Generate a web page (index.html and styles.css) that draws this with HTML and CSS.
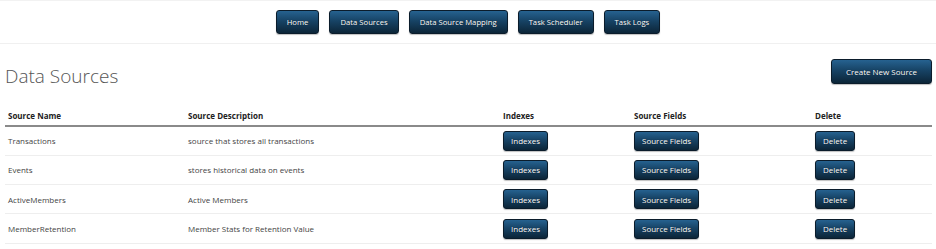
FILE: index.html
```html
<!DOCTYPE html>
<html lang="en">
<head>
  <meta charset="UTF-8">
  <title>Data Sources</title>
  <meta name="viewport" content="width=device-width, initial-scale=1.0">
  <link rel="stylesheet" href="styles.css">
</head>
<body>

<nav class="top-nav">
  <a class="btn nav-btn" href="#">Home</a>
  <a class="btn nav-btn" href="#">Data Sources</a>
  <a class="btn nav-btn" href="#">Data Source Mapping</a>
  <a class="btn nav-btn" href="#">Task Scheduler</a>
  <a class="btn nav-btn" href="#">Task Logs</a>
</nav>

<main class="page">
  <div class="page-head">
    <h1>Data Sources</h1>
    <button class="btn create-btn">Create New Source</button>
  </div>

  <table class="sources">
    <thead>
      <tr>
        <th class="col-name">Source Name</th>
        <th class="col-desc">Source Description</th>
        <th class="col-idx">Indexes</th>
        <th class="col-fields">Source Fields</th>
        <th class="col-del">Delete</th>
      </tr>
    </thead>
    <tbody>
      <tr>
        <td>Transactions</td>
        <td>source that stores all transactions</td>
        <td><button class="btn row-btn">Indexes</button></td>
        <td><button class="btn row-btn">Source Fields</button></td>
        <td><button class="btn row-btn">Delete</button></td>
      </tr>
      <tr>
        <td>Events</td>
        <td>stores historical data on events</td>
        <td><button class="btn row-btn">Indexes</button></td>
        <td><button class="btn row-btn">Source Fields</button></td>
        <td><button class="btn row-btn">Delete</button></td>
      </tr>
      <tr>
        <td>ActiveMembers</td>
        <td>Active Members</td>
        <td><button class="btn row-btn">Indexes</button></td>
        <td><button class="btn row-btn">Source Fields</button></td>
        <td><button class="btn row-btn">Delete</button></td>
      </tr>
      <tr>
        <td>MemberRetention</td>
        <td>Member Stats for Retention Value</td>
        <td><button class="btn row-btn">Indexes</button></td>
        <td><button class="btn row-btn">Source Fields</button></td>
        <td><button class="btn row-btn">Delete</button></td>
      </tr>
    </tbody>
  </table>
</main>

</body>
</html>
```

FILE: styles.css
```css
* {
  box-sizing: border-box;
}
body {
  margin: 0;
  font-family: 'Segoe UI', 'Open Sans', sans-serif;
  background: #fff;
  color: #444;
}
.btn {
  display: inline-flex;
  align-items: center;
  justify-content: center;
  background: linear-gradient(to bottom, #266290 0%, #174365 45%, #0c2538 100%);
  border: 1px solid #0b1c2b;
  border-radius: 3px;
  color: #fff;
  font-family: inherit;
  text-decoration: none;
  cursor: pointer;
  text-shadow: 0 0 1px rgba(0,0,0,0.6);
  box-shadow: 0 1px 1px rgba(0,0,0,0.25);
}
.top-nav {
  display: flex;
  justify-content: center;
  gap: 10px;
  padding: 9px 0 9px;
  border-top: 1px solid #f2f2f2;
  border-bottom: 1px solid #f0f0f0;
}
.nav-btn {
  height: 24px;
  padding: 0 10px;
  font-size: 7.7px;
}
.page {
  padding: 0 4px 0 5px;
}
.page-head {
  display: flex;
  justify-content: space-between;
  align-items: flex-start;
  padding-top: 15px;
}
h1 {
  margin: 4px 0 0;
  font-size: 19px;
  font-weight: 300;
  color: #555;
}
.create-btn {
  height: 25px;
  width: 101px;
  font-size: 8px;
}
.sources {
  width: 100%;
  margin-top: 15px;
  border-collapse: collapse;
  font-size: 8px;
}
.sources th {
  text-align: left;
  font-weight: bold;
  color: #222;
  padding: 0 3px 4px;
  height: 22px;
  vertical-align: bottom;
  border-bottom: 2px solid #8a8a8a;
}
.sources td {
  height: 29.3px;
  padding: 0 3px;
  border-bottom: 1px solid #eeeeee;
  vertical-align: middle;
}
.col-name {
  width: 180px;
}
.col-desc {
  width: 315px;
}
.col-idx {
  width: 131px;
}
.col-fields {
  width: 181px;
}
.row-btn {
  height: 20px;
  padding: 0 7px;
  font-size: 8px;
}
```
